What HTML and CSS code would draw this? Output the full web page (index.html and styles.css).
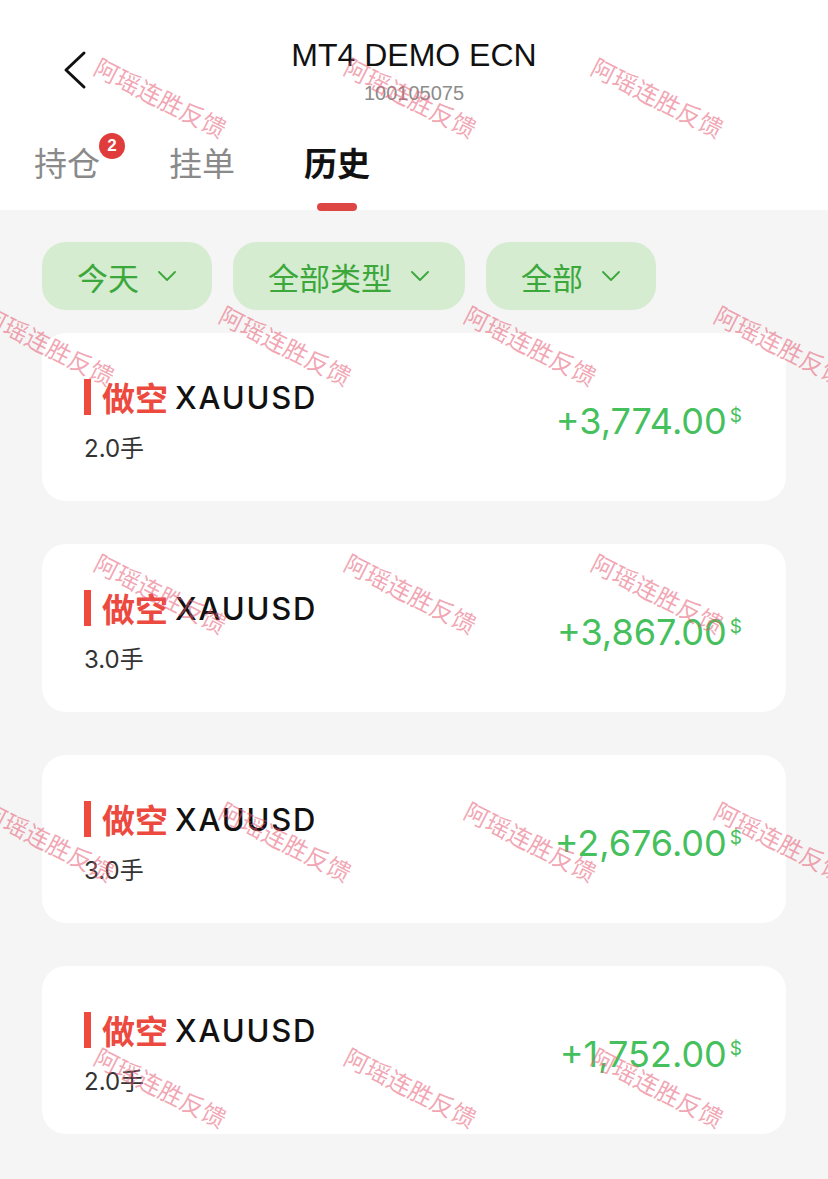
FILE: index.html
```html
<!DOCTYPE html>
<html lang="zh-CN">
<head>
    <meta charset="UTF-8">
    <meta name="viewport" content="width=device-width, initial-scale=1.0">
    <title>历史</title>
    <link rel="stylesheet" href="styles.css">
</head>
<body>
    <div class="header">
        <div class="topbar">
            <button class="back" aria-label="返回">
                <svg width="26" height="40" viewBox="0 0 26 40">
                    <polyline points="22,3 4,20 22,37" fill="none" stroke="#111" stroke-width="3" stroke-linecap="round" stroke-linejoin="round"/>
                </svg>
            </button>
            <div class="title-block">
                <div class="title">MT4 DEMO ECN</div>
                <div class="account">100105075</div>
            </div>
            <div></div>
        </div>
        <div class="tabs">
            <div class="tab">持仓<span class="badge">2</span></div>
            <div class="tab">挂单</div>
            <div class="tab active">历史<span class="tab-line"></span></div>
        </div>
    </div>

    <div class="content">
        <div class="filters">
            <div class="pill">今天
                <svg class="chev" width="18" height="10" viewBox="0 0 18 10"><polyline points="1,1 9,9 17,1"/></svg>
            </div>
            <div class="pill">全部类型
                <svg class="chev" width="18" height="10" viewBox="0 0 18 10"><polyline points="1,1 9,9 17,1"/></svg>
            </div>
            <div class="pill">全部
                <svg class="chev" width="18" height="10" viewBox="0 0 18 10"><polyline points="1,1 9,9 17,1"/></svg>
            </div>
        </div>

        <div class="list">
            <div class="card">
                <div class="card-left">
                    <div class="order-title"><span class="bar"></span><span class="side">做空</span><span class="symbol">XAUUSD</span></div>
                    <div class="lots">2.0手</div>
                </div>
                <div class="amount">+3,774.00<span class="cur">$</span></div>
            </div>
            <div class="card">
                <div class="card-left">
                    <div class="order-title"><span class="bar"></span><span class="side">做空</span><span class="symbol">XAUUSD</span></div>
                    <div class="lots">3.0手</div>
                </div>
                <div class="amount">+3,867.00<span class="cur">$</span></div>
            </div>
            <div class="card">
                <div class="card-left">
                    <div class="order-title"><span class="bar"></span><span class="side">做空</span><span class="symbol">XAUUSD</span></div>
                    <div class="lots">3.0手</div>
                </div>
                <div class="amount">+2,676.00<span class="cur">$</span></div>
            </div>
            <div class="card">
                <div class="card-left">
                    <div class="order-title"><span class="bar"></span><span class="side">做空</span><span class="symbol">XAUUSD</span></div>
                    <div class="lots">2.0手</div>
                </div>
                <div class="amount">+1,752.00<span class="cur">$</span></div>
            </div>
        </div>
    </div>

    <!-- watermark overlay -->
    <div class="watermarks">
        <span class="wm" style="left:102px;top:54px">阿瑶连胜反馈</span>
        <span class="wm" style="left:352px;top:54px">阿瑶连胜反馈</span>
        <span class="wm" style="left:599px;top:54px">阿瑶连胜反馈</span>

        <span class="wm" style="left:-10px;top:302px">阿瑶连胜反馈</span>
        <span class="wm" style="left:227px;top:302px">阿瑶连胜反馈</span>
        <span class="wm" style="left:472px;top:302px">阿瑶连胜反馈</span>
        <span class="wm" style="left:722px;top:302px">阿瑶连胜反馈</span>

        <span class="wm" style="left:102px;top:550px">阿瑶连胜反馈</span>
        <span class="wm" style="left:352px;top:550px">阿瑶连胜反馈</span>
        <span class="wm" style="left:599px;top:550px">阿瑶连胜反馈</span>

        <span class="wm" style="left:-10px;top:798px">阿瑶连胜反馈</span>
        <span class="wm" style="left:227px;top:798px">阿瑶连胜反馈</span>
        <span class="wm" style="left:472px;top:798px">阿瑶连胜反馈</span>
        <span class="wm" style="left:722px;top:798px">阿瑶连胜反馈</span>

        <span class="wm" style="left:102px;top:1044px">阿瑶连胜反馈</span>
        <span class="wm" style="left:352px;top:1044px">阿瑶连胜反馈</span>
        <span class="wm" style="left:599px;top:1044px">阿瑶连胜反馈</span>
    </div>
</body>
</html>
```

FILE: styles.css
```css
body {
    margin: 0;
    min-height: 1179px;
    position: relative;
    overflow: hidden;
    background-color: #f5f5f5; /* page grey */
    font-family: "Liberation Sans", "Noto Sans CJK SC", sans-serif;
    color: #111;
}

/* header */
.header {
    background-color: #fff;
}
.topbar {
    display: grid;
    grid-template-columns: 1fr auto 1fr;
    padding-top: 36px;
}
.back {
    justify-self: start;
    margin: 14px 0 0 62px;
    padding: 0;
    border: none;
    background: none;
    width: 26px;
    height: 40px;
}
.back svg {
    display: block;
}
.title-block {
    text-align: center;
}
.title {
    font-size: 32px;
    line-height: 38px;
    color: #111;
}
.account {
    margin-top: 7px;
    font-size: 20px;
    line-height: 24px;
    color: #8c8c8c;
}

/* tabs */
.tabs {
    display: flex;
    align-items: flex-start;
    gap: 69px;
    padding: 37px 0 0 34px;
    height: 68px;
}
.tab {
    position: relative;
    display: flex;
    flex-direction: column;
    align-items: center;
    font-family: "Noto Sans CJK SC", sans-serif;
    font-size: 33px;
    line-height: 40px;
    color: #8a8a8a;
}
.tab.active {
    color: #111;
    font-weight: bold;
}
.tab-line {
    width: 40px;
    height: 8px;
    margin-top: 21px;
    border-radius: 4px;
    background-color: #de4646;
}
.badge {
    position: absolute;
    top: -9px;
    right: -25px;
    width: 26px;
    height: 26px;
    border-radius: 50%;
    background-color: #e03c3c;
    color: #fff;
    font-family: "Liberation Sans", sans-serif;
    font-size: 17px;
    font-weight: bold;
    line-height: 26px;
    text-align: center;
}

/* content */
.content {
    padding: 32px 42px 0;
}
.filters {
    display: flex;
    gap: 21px;
}
.pill {
    display: flex;
    align-items: center;
    gap: 19px;
    height: 68px;
    padding: 0 36px 0 35px;
    border-radius: 24px;
    background-color: #d5ecd0; /* light green */
    color: #3ca83c;
    font-family: "Noto Sans CJK SC", sans-serif;
    font-size: 31px;
}
.chev polyline {
    fill: none;
    stroke: #3ca83c;
    stroke-width: 1.8;
    stroke-linecap: round;
    stroke-linejoin: round;
}

.list {
    display: flex;
    flex-direction: column;
    gap: 43px;
    margin-top: 23px;
}
.card {
    display: flex;
    align-items: center;
    justify-content: space-between;
    height: 168px;
    padding: 0 44px 0 42px;
    border-radius: 24px;
    background-color: #fff;
}
.card-left {
    display: flex;
    flex-direction: column;
    gap: 20px;
    margin-top: 8px;
}
.order-title {
    display: flex;
    align-items: center;
    height: 36px;
}
.bar {
    width: 7px;
    height: 36px;
    margin-right: 11px;
    background-color: #ee4b3e;
}
.side {
    margin-right: 7px;
    font-family: "Noto Sans CJK SC", sans-serif;
    font-size: 33px;
    font-weight: bold;
    color: #ec4a3f;
}
.symbol {
    font-family: Inter, "Liberation Sans", sans-serif;
    font-size: 31px;
    font-weight: 500;
    letter-spacing: 1.8px;
    color: #111;
}
.lots {
    font-family: Inter, "Noto Sans CJK SC", sans-serif;
    font-size: 24px;
    line-height: 28px;
    color: #333;
}
.amount {
    display: flex;
    align-items: flex-start;
    margin-top: 8px;
    font-family: Inter, "Liberation Sans", sans-serif;
    font-size: 36px;
    line-height: 40px;
    color: #45c05d;
}
.cur {
    margin: 5px 0 0 3px;
    font-size: 19px;
    line-height: 20px;
}

/* watermark */
.watermarks {
    position: absolute;
    top: 0;
    left: 0;
    right: 0;
    bottom: 0;
    pointer-events: none;
}
.wm {
    position: absolute;
    white-space: nowrap;
    font-family: "Noto Sans CJK SC", sans-serif;
    font-size: 24px;
    line-height: 1;
    color: rgba(230, 90, 115, 0.55);
    transform: rotate(27deg);
    transform-origin: 0 0;
}
```
